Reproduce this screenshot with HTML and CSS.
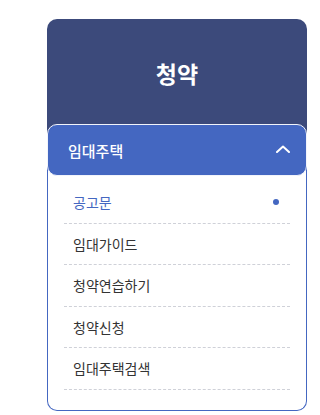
FILE: index.html
```html
<!DOCTYPE html>
<html lang="ko">
<head>
<meta charset="utf-8">
<link rel="stylesheet" href="styles.css">
</head>
<body>
<nav class="card">
  <div class="title">청약</div>
  <div class="menu">
    <div class="menu-head">
      <span class="head-label">임대주택</span>
      <svg class="chev" width="14" height="8" viewBox="0 0 14 8"><path d="M1 7 L7 1.5 L13 7" fill="none" stroke="#fff" stroke-width="2" stroke-linecap="round" stroke-linejoin="round"/></svg>
    </div>
    <ul class="menu-list">
      <li class="item active"><span>공고문</span><i class="dot"></i></li>
      <li class="item"><span>임대가이드</span></li>
      <li class="item"><span>청약연습하기</span></li>
      <li class="item"><span>청약신청</span></li>
      <li class="item"><span>임대주택검색</span></li>
    </ul>
  </div>
</nav>
</body>
</html>
```
FILE: styles.css
```css
* { box-sizing: border-box; }
html, body { margin: 0; padding: 0; background: #fff; }
body {
  padding: 19px 0 0 47px;
  font-family: "Noto Sans CJK KR", "Noto Sans", sans-serif;
}
.card { width: 260px; }
.title {
  height: 115px;
  padding: 3px 0 10px;
  background: #3c4a7b;
  border-radius: 10px 10px 0 0;
  color: #fff;
  font-size: 23px;
  font-weight: 700;
  display: flex;
  align-items: center;
  justify-content: center;
}
.menu { margin-top: -10px; position: relative; }
.menu-head {
  position: relative;
  z-index: 1;
  height: 52px;
  margin-top: -1px;
  background: #4467c1;
  border: 1px solid #f2f4fb;
  border-radius: 10px;
  display: flex;
  align-items: center;
  justify-content: space-between;
  padding: 0 16px 0 20px;
  color: #fff;
  font-size: 15px;
  font-weight: 500;
}
.head-label { display: block; }
.chev { display: block; margin-top: -2px; }
.menu-list {
  list-style: none;
  margin: -10px 0 0;
  padding: 16px 16px 20px;
  background: #fff;
  border: 1px solid #4467c1;
  border-top: none;
  border-radius: 0 0 10px 10px;
}
.item {
  display: flex;
  align-items: center;
  justify-content: space-between;
  padding: 10px 11px 10px 9px;
  line-height: 20.5px;
  border-bottom: 1px dashed #cfd1d8;
  font-size: 14px;
  color: #333;
}
.item.active { color: #4467c1; }
.dot {
  width: 6px;
  height: 6px;
  border-radius: 50%;
  background: #4467c1;
}
```
